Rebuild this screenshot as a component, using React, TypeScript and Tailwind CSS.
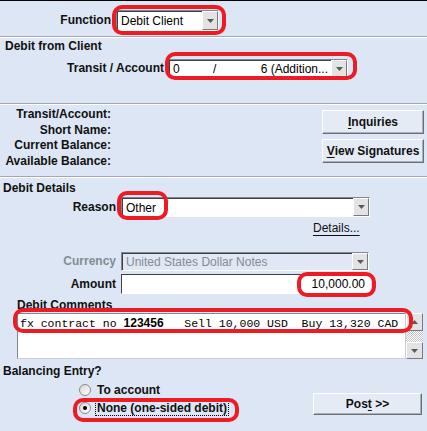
import clsx from "clsx";

const Arrow = ({ up }: { up?: boolean }) => (
  <svg width="7" height="4" viewBox="0 0 7 4" className={clsx(up && "rotate-180")}>
    <path d="M0 0h7L3.5 4z" fill="#5a5a5a" />
  </svg>
);

function Combo({
  className,
  disabled,
  children,
}: {
  className?: string;
  disabled?: boolean;
  children: React.ReactNode;
}) {
  return (
    <div
      className={clsx(
        "flex border border-t-[#7d8796] border-l-[#7d8796] border-b-white border-r-white",
        className
      )}
    >
      <div
        className={clsx(
          "flex flex-1 items-center px-[3px] border-t border-l border-t-[#404040] border-l-[#404040]",
          disabled ? "bg-[#dfe8f4] text-[#858b93]" : "bg-white text-black"
        )}
      >
        {children}
      </div>
      <div className="flex w-[16px] items-center justify-center border border-t-white border-l-white border-b-[#7a7a7a] border-r-[#7a7a7a] bg-[#e3e3e3]">
        <Arrow />
      </div>
    </div>
  );
}

function Button({ className, children }: { className?: string; children: React.ReactNode }) {
  return (
    <div
      className={clsx(
        "flex items-center justify-center border border-t-white border-l-white border-b-[#6e6e6e] border-r-[#6e6e6e] bg-[#e4ebf5] font-bold text-[#111] shadow-[inset_-1px_-1px_0_#a9b1bc]",
        className
      )}
    >
      {children}
    </div>
  );
}

const Sep = () => <div className="h-[2px] border-t border-t-[#a4a8ad] border-b border-b-white" />;

// hand-drawn red markers laid over the form
const marks = [
  "left-[112px] top-[5px] w-[114px] h-[30px]",
  "left-[165px] top-[52px] w-[192px] h-[28px]",
  "left-[117px] top-[191px] w-[51px] h-[29px]",
  "left-[297px] top-[272px] w-[79px] h-[25px]",
  "left-[13px] top-[308px] w-[400px] h-[25px]",
  "left-[73px] top-[398px] w-[166px] h-[24px]",
];

export default function App() {
  return (
    <div className="relative h-[431px] w-[427px] overflow-hidden bg-[#dce6f4] font-['Liberation_Sans',Arial,sans-serif] text-[12px] text-[#111]">
      <div className="h-px bg-black" />

      {/* Function */}
      <div className="flex h-[35px] pt-[9px]">
        <div className="w-[111px] text-right font-bold leading-[21px]">Function</div>
        <Combo className="ml-[5px] h-[21px] w-[103px]">Debit Client</Combo>
      </div>
      <Sep />

      {/* Debit from Client */}
      <div className="h-[65px] pt-px">
        <div className="pl-[5px] font-bold leading-[14px]">Debit from Client</div>
        <div className="mt-[6px] flex">
          <div className="w-[164px] text-right font-bold leading-[18px]">Transit / Account</div>
          <Combo className="ml-[4px] h-[19px] w-[180px]">
            <span className="w-[40px]">0</span>
            <span>/</span>
            <span className="ml-auto">6 (Addition...</span>
          </Combo>
        </div>
      </div>
      <Sep />

      {/* Account info */}
      <div className="flex h-[71px]">
        <div className="w-[111px] pt-[2px] text-right font-bold leading-[15.5px]">
          <div>Transit/Account:</div>
          <div>Short Name:</div>
          <div>Current Balance:</div>
          <div>Available Balance:</div>
        </div>
        <div className="ml-auto mr-[3px] flex w-[102px] flex-col gap-[5px] pt-[5px]">
          <Button className="h-[24px]">
            <span className="underline underline-offset-2">I</span>nquiries
          </Button>
          <Button className="h-[24px]">
            <span className="underline underline-offset-2">V</span>iew Signatures
          </Button>
        </div>
      </div>
      <Sep />

      {/* Debit Details */}
      <div className="pt-[3px]">
        <div className="pl-[3px] font-bold leading-[14px]">Debit Details</div>
        <div className="mt-[2px] flex">
          <div className="w-[116px] text-right font-bold leading-[20px]">Reason</div>
          <Combo className="ml-[5px] h-[20px] w-[249px]">Other</Combo>
        </div>
        <div className="mt-[4px] pl-[313px] leading-[14px]">
          <span className="underline underline-offset-[3px]">Details...</span>
        </div>
        <div className="mt-[17px] flex">
          <div className="w-[116px] text-right font-bold leading-[19px] text-[#858b93]">Currency</div>
          <Combo disabled className="ml-[5px] h-[19px] w-[248px]">
            United States Dollar Notes
          </Combo>
        </div>
        <div className="mt-[3px] flex">
          <div className="w-[116px] text-right font-bold leading-[20px]">Amount</div>
          <div className="ml-[5px] flex h-[20px] w-[250px] items-center justify-end border border-t-[#404040] border-l-[#404040] border-b-white border-r-white bg-white pr-[5px] text-black">
            10,000.00
          </div>
        </div>

        <div className="mt-[4px] pl-[17px] font-bold leading-[14px]">Debit Comments</div>
        <div className="ml-[17px] mt-px flex h-[46px] w-[406px]">
          <div className="flex-1 border border-t-[#7d8796] border-l-[#7d8796] border-b-[#c9ced6] border-r-[#c9ced6] bg-white pl-[2px] pt-[2px] leading-[15px] text-black">
            <span className="font-['Liberation_Mono',monospace] text-[11.5px] whitespace-pre">fx contract no </span>
            <span className="font-bold">123456</span>
            <span className="font-['Liberation_Mono',monospace] text-[11.5px] whitespace-pre">   Sell 10,000 USD  Buy 13,320 CAD</span>
          </div>
          <div className="flex w-[17px] flex-col">
            <div className="flex h-[18px] items-center justify-center border border-t-white border-l-white border-b-[#7a7a7a] border-r-[#7a7a7a] bg-[#e3e3e3]">
              <Arrow up />
            </div>
            <div className="flex-1 bg-[repeating-conic-gradient(#c4c4c4_0_25%,#ffffff_0_50%)] bg-[length:2px_2px]" />
            <div className="flex h-[17px] items-center justify-center border border-t-white border-l-white border-b-[#7a7a7a] border-r-[#7a7a7a] bg-[#e3e3e3]">
              <Arrow />
            </div>
          </div>
        </div>

        <div className="mt-[5px] pl-[3px] font-bold leading-[14px]">Balancing Entry?</div>
        <div className="flex">
          <div className="pl-[79px]">
            <div className="mt-[5px] flex h-[14px] items-center gap-[6px]">
              <span className="h-[12px] w-[12px] rounded-full border border-[#8a8a8a] bg-gradient-to-br from-[#d8d8d8] to-white" />
              <span className="font-bold">To account</span>
            </div>
            <div className="mt-[3px] flex h-[16px] items-center gap-[4px]">
              <span className="flex h-[12px] w-[12px] items-center justify-center rounded-full border border-[#8a8a8a] bg-gradient-to-br from-[#d8d8d8] to-white">
                <span className="h-[4px] w-[4px] rounded-full bg-black" />
              </span>
              <span className="border border-dotted border-black px-px font-bold leading-[14px]">
                None (one-sided debit)
              </span>
            </div>
          </div>
          <Button className="ml-auto mr-[5px] mt-[15px] h-[22px] w-[109px]">
            Pos<span className="underline underline-offset-2">t</span>&nbsp;&gt;&gt;
          </Button>
        </div>
      </div>

      {marks.map((m) => (
        <div key={m} className={clsx("absolute rounded-[10px] border-[4px] border-[#ed1c24]", m)} />
      ))}
    </div>
  );
}
